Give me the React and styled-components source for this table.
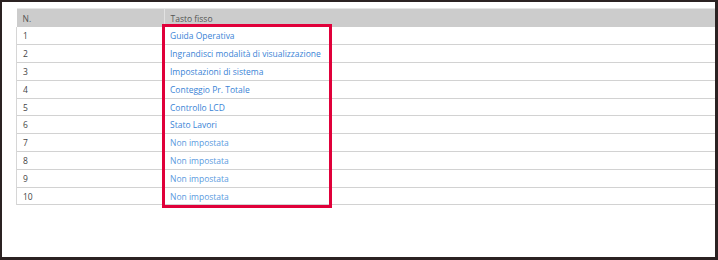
import React from "react";
import styled, { createGlobalStyle } from "styled-components";

const GlobalStyle = createGlobalStyle`
  html, body {
    margin: 0;
    padding: 0;
    background: #ffffff;
  }
  body {
    font-family: "Open Sans", "Noto Sans", sans-serif;
  }
`;

const Frame = styled.div`
  box-sizing: border-box;
  width: 718px;
  height: 260px;
  border-style: solid;
  border-color: #2b2222;
  border-width: 2px 3px 3px 2px;
  background: #ffffff;
  padding: 6px 0 0 14px;
  overflow: hidden;
`;

const TableWrap = styled.div`
  position: relative;
`;

const Table = styled.table`
  width: 100%;
  border-collapse: collapse;
  table-layout: fixed;
  font-size: 8.5px;
`;

const HeadCell = styled.th`
  height: 18px;
  padding: 0 0 0 6px;
  background: #cccccc;
  border-top: 1px solid #e6e6e6;
  border-left: ${(p) => (p.$first ? "none" : "1px solid #e2e2e2")};
  color: #555555;
  font-weight: 400;
  text-align: left;
  width: ${(p) => p.$width || "auto"};
`;

const Row = styled.tr`
  height: 17.8px;
  border-bottom: 1px solid #d2d2d2;
`;

const NumCell = styled.td`
  padding: 0 0 0 6px;
  border-left: 1px solid #d6d6d6;
  color: #444444;
`;

const KeyCell = styled.td`
  padding: 0 0 0 6px;
  color: ${(p) => (p.$unset ? "#5b9be0" : "#3a84d6")};
  white-space: nowrap;
`;

const Highlight = styled.div`
  position: absolute;
  left: 146px;
  top: 16px;
  width: 170px;
  height: 184px;
  box-sizing: border-box;
  border: 3px solid #e0003a;
  pointer-events: none;
`;

const keys = [
  "Guida Operativa",
  "Ingrandisci modalità di visualizzazione",
  "Impostazioni di sistema",
  "Conteggio Pr. Totale",
  "Controllo LCD",
  "Stato Lavori",
  null,
  null,
  null,
  null,
];

export default function App() {
  return (
    <>
      <GlobalStyle />
      <Frame>
        <TableWrap>
          <Table>
            <thead>
              <tr>
                <HeadCell $first $width="141px">N.</HeadCell>
                <HeadCell>Tasto fisso</HeadCell>
              </tr>
            </thead>
            <tbody>
              {keys.map((k, i) => (
                <Row key={i}>
                  <NumCell>{i + 1}</NumCell>
                  <KeyCell $unset={!k}>{k || "Non impostata"}</KeyCell>
                </Row>
              ))}
            </tbody>
          </Table>
          <Highlight />
        </TableWrap>
      </Frame>
    </>
  );
}
